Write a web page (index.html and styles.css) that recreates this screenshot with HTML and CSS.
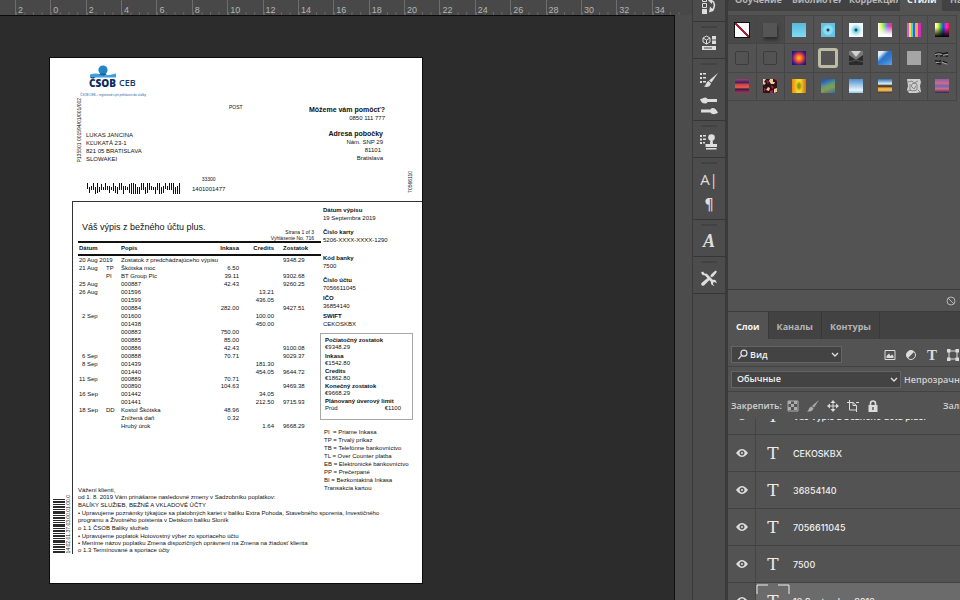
FILE: index.html
```html
<!DOCTYPE html>
<html lang="ru">
<head>
<meta charset="utf-8">
<title>Výpis z účtu</title>
<link rel="stylesheet" href="styles.css">
</head>
<body>
<div class="app">
  <main class="workspace">
    <div class="ruler">
      <span>2</span><span>0</span><span>2</span><span>4</span><span>6</span><span>8</span><span>10</span><span>12</span><span>14</span><span>16</span><span>18</span><span>20</span><span>22</span><span>24</span><span>26</span><span>28</span><span>30</span><span>32</span><span>34</span>
    </div>
    <div class="stage">
      <div class="canvas">
        <article class="page" lang="sk">
          <header class="letterhead">
            <div class="sender">
              <div class="brand">
                <svg class="brand-mark" viewBox="0 0 28 13" aria-hidden="true"><circle cx="14" cy="5" r="4.6" fill="#2484c6"/><path d="M1 9.500Q7 7.500 12 9.500T27 8.500V12.500H1z" fill="#3fa0dc"/><path d="M10 9.500Q14 7 18 9.800Q14 11.500 10 9.500" fill="#1a5fa5"/></svg>
                <div class="brand-name"><b>ČSOB</b> <span>CEB</span></div>
                <div class="brand-note">ČSOB CEB – registered s pri prihlásení do služby</div>
              </div>
              <div class="recipient">
                <span class="sideways">P135501 001594/01/001/002</span>
                <address>LUKAS JANCINA<br>KĽUKATÁ 23-1<br>821 05 BRATISLAVA<br>SLOWAKEI</address>
              </div>
              <div class="routing">
                <svg class="post-code" viewBox="0 0 94 11" aria-hidden="true"><path d="M.5 0v6M2.500 4v6M4.500 3v4M6.500 0v7M8.500 4v7M10.500 0v10M12.500 4v5M14.500 1v6M16.500 4v3M18.500 0v7M20.500 3v4M22.500 3v7M24.500 4v3M26.500 0v8M28.500 3v7M30.500 4v7M32.500 0v7M34.500 0v7M36.500 3v8M38.500 3v4M40.500 4v3M42.500 1v9M44.500 0v11M46.500 0v11M48.500 1v10M50.500 4v7M52.500 4v7M54.500 0v7M56.500 0v7M58.500 4v7M60.500 0v10M62.500 0v7M64.500 3v4M66.500 4v3M68.500 4v7M70.500 0v7M72.500 0v11M74.500 4v7M76.500 3v7M78.500 0v6M80.500 3v4M82.500 0v7M84.500 0v7M86.500 0v11M88.500 4v7M90.500 3v8M92.500 0v11"/></svg>
                <div class="routing-ids"><small>33300</small><span>1401001477</span></div>
              </div>
            </div>
            <div class="post">POST</div>
            <div class="contact">
              <p><strong>Môžeme vám pomôcť?</strong><br>0850 111 777</p>
              <p class="branch"><strong>Adresa pobočky</strong><br>Nám. SNP 29<br><span class="zip">81101</span><br>Bratislava</p>
            </div>
            <span class="sideways form-id">70566110</span>
          </header>

          <div class="statement">
            <div class="rail">
              <svg class="stack-code" viewBox="0 0 12 54" preserveAspectRatio="none" aria-hidden="true"><path d="M0 0h12v1H0zM0 2h12v2H0zM0 5h12v1H0zM0 7h12v2H0zM0 10h12v1H0zM0 12h12v3H0zM0 16h12v1H0zM0 18h12v2H0zM0 21h12v1H0zM0 23h12v1H0zM0 25h12v3H0zM0 29h12v1H0zM0 31h12v2H0zM0 34h12v1H0zM0 36h12v2H0zM0 39h12v1H0zM0 41h12v3H0zM0 45h12v1H0zM0 47h12v2H0zM0 50h12v1H0zM0 52h12v2H0z"/></svg>
              <span class="sideways">14.02.01.37.03.00.01.00.0</span>
            </div>
            <div class="sheet">
              <div class="columns">
                <section class="movements">
                  <div class="heading">
                    <h1>Váš výpis z bežného účtu plus.</h1>
                    <p>Strana 1 of 3<br>Vyhlásenie No. 716</p>
                  </div>
                  <table>
                    <colgroup><col class="c-date"><col class="c-code"><col class="c-text"><col class="c-debit"><col class="c-credit"><col></colgroup>
                    <thead><tr><th>Dátum</th><th></th><th>Popis</th><th class="num">Inkasa</th><th class="num">Credits</th><th class="bal">Zostatok</th></tr></thead>
                    <tbody>
                      <tr><td>20 Aug 2019</td><td></td><td>Zostatok z predchádzajúceho výpisu</td><td></td><td></td><td class="bal">9348.29</td></tr>
                      <tr><td>21 Aug</td><td>TP</td><td>Škótska moc</td><td class="num">6.50</td><td></td><td></td></tr>
                      <tr><td></td><td>PI</td><td>BT Group Plc</td><td class="num">39.11</td><td></td><td class="bal">9302.68</td></tr>
                      <tr><td>25 Aug</td><td></td><td>000887</td><td class="num">42.43</td><td></td><td class="bal">9260.25</td></tr>
                      <tr><td>26 Aug</td><td></td><td>001596</td><td></td><td class="num">13.21</td><td></td></tr>
                      <tr><td></td><td></td><td>001599</td><td></td><td class="num">436.05</td><td></td></tr>
                      <tr><td></td><td></td><td>000884</td><td class="num">282.00</td><td></td><td class="bal">9427.51</td></tr>
                      <tr><td class="short">2 Sep</td><td></td><td>001600</td><td></td><td class="num">100.00</td><td></td></tr>
                      <tr><td></td><td></td><td>001438</td><td></td><td class="num">450.00</td><td></td></tr>
                      <tr><td></td><td></td><td>000883</td><td class="num">750.00</td><td></td><td></td></tr>
                      <tr><td></td><td></td><td>000885</td><td class="num">85.00</td><td></td><td></td></tr>
                      <tr><td></td><td></td><td>000886</td><td class="num">42.43</td><td></td><td class="bal">9100.08</td></tr>
                      <tr><td class="short">6 Sep</td><td></td><td>000888</td><td class="num">70.71</td><td></td><td class="bal">9029.37</td></tr>
                      <tr><td class="short">8 Sep</td><td></td><td>001439</td><td></td><td class="num">181.30</td><td></td></tr>
                      <tr><td></td><td></td><td>001440</td><td></td><td class="num">454.05</td><td class="bal">9644.72</td></tr>
                      <tr class="tight"><td>11 Sep</td><td></td><td>000889</td><td class="num">70.71</td><td></td><td></td></tr>
                      <tr class="tight"><td></td><td></td><td>000890</td><td class="num">104.63</td><td></td><td class="bal">9469.38</td></tr>
                      <tr><td>16 Sep</td><td></td><td>001442</td><td></td><td class="num">34.05</td><td></td></tr>
                      <tr><td></td><td></td><td>001441</td><td></td><td class="num">212.50</td><td class="bal">9715.93</td></tr>
                      <tr><td>18 Sep</td><td>DD</td><td>Kostol Škótska</td><td class="num">48.96</td><td></td><td></td></tr>
                      <tr><td></td><td></td><td>Znížená daň</td><td class="num">0.32</td><td></td><td></td></tr>
                      <tr><td></td><td></td><td>Hrubý úrok</td><td></td><td class="num">1.64</td><td class="bal">9668.29</td></tr>
                    </tbody>
                  </table>
                </section>
                <aside class="details">
                  <dl class="facts">
                    <div><dt>Dátum výpisu</dt><dd>19 Septembra 2019</dd></div>
                    <div><dt>Číslo karty</dt><dd>5206-XXXX-XXXX-1290</dd></div>
                    <div class="wide"><dt>Kód banky</dt><dd>7500</dd></div>
                    <div><dt>Číslo účtu</dt><dd>7056611045</dd></div>
                    <div class="close"><dt>IČO</dt><dd>36854140</dd></div>
                    <div class="close"><dt>SWIFT</dt><dd>CEKOSKBX</dd></div>
                  </dl>
                  <dl class="summary">
                    <dt>Počiatočný zostatok</dt><dd class="opening">€9348.29</dd>
                    <dt>Inkasa</dt><dd>€1542.80</dd>
                    <dt>Credits</dt><dd>€1862.80</dd>
                    <dt>Konečný zostatok</dt><dd>€9668.29</dd>
                    <dt>Plánovaný úverový limit</dt><dd class="limit"><span>Prúd</span><span>€1100</span></dd>
                  </dl>
                  <p class="legend">PI &nbsp;= Priame Inkasa<br>TP = Trvalý príkaz<br>TB = Telefónne bankovníctvo<br>TL = Over Counter platba<br>EB = Elektronické bankovníctvo<br>PP = Prečerpané<br>BI = Bezkontaktná Inkasa<br>Transakcia kartou</p>
                </aside>
              </div>
              <section class="letter">
                <p>Vážení klienti,</p>
                <p>od 1. 8. 2019 Vám prinášame nasledovné zmeny v Sadzobníku poplatkov:</p>
                <p class="spaced">BALÍKY SLUŽIEB, BEŽNÉ A VKLADOVÉ ÚČTY</p>
                <p class="spaced">• Upravujeme poznámky týkajúce sa platobných kariet v balíku Extra Pohoda, Stavebného sporenia, Investičného<br>programu a Životného poistenia v Detskom balíku Sloník</p>
                <p class="spaced">o 1.1 ČSOB Balíky služieb</p>
                <p class="spaced">• Upravujeme poplatok Hotovostný výber zo sporiaceho účtu</p>
                <p>• Meníme názov poplatku Zmena dispozičných oprávnení na Zmena na žiadosť klienta</p>
                <p>o 1.3 Termínované a sporiace účty</p>
              </section>
            </div>
          </div>
        </article>
      </div>
      <div class="scroll-track"></div>
    </div>
  </main>

  <nav class="dock" aria-label="Панели">
    <div class="dock-group first">
      <button aria-label="История"><svg viewBox="0 0 16 18"><path d="M1.500 1.500h4v3h-4zM1.500 6.500h4v4h-4z" class="line"/><path d="M1 12h5v5H1z"/><path d="M9 3.500c5 0 6 7 1.500 10.500" class="line bold"/><path d="M8 15.500l1-6 4 4zM7 3.500L11 0v7z"/></svg></button>
    </div>
    <div class="dock-group one">
      <button aria-label="3D"><svg viewBox="0 0 16 18"><path d="M5.500 2L9 4v4L5.500 10 2 8V4zM2 4l3.500 2L9 4M5.500 6v4" class="line"/><path d="M11 2h4v3.500h-4zM11 6.500h4V10h-4zM1 12h14v4H1z"/><path d="M3 14h8" class="cut"/></svg></button>
    </div>
    <div class="dock-group two">
      <button aria-label="Кисти"><svg viewBox="0 0 18 18"><path d="M0 2h2v2H0zM3 2h3v1.500H3zM0 6h2v2H0zM3 6h3v1.500H3zM0 10h2v2H0zM3 10h3v1.500H3z"/><path d="M18 2L11.500 11.500 9 9.500zM8.500 10l2.500 2.500C10 16 7 16.500 4 15.500c2-.8 2-4.500 4.500-5.500z"/></svg></button>
      <button aria-label="Настройки кисти"><svg viewBox="0 0 18 18"><path d="M0 2c2 .5 3-1.500 5.500-1.500 1 0 1.500.8 2 1.500H17v3H7.500C7 6 6 6.500 5 6.500 2.500 6.500 1 5 0 2zM18 16c-2 .5-3 1.500-5.500 1-1 0-1.500-.8-2-1.500H1v-3h9.500c.5-.8 1-1.500 2-1.500 2.500 0 4.500 2 5.500 5z"/></svg></button>
    </div>
    <div class="dock-group one">
      <button aria-label="Источник клонов"><svg viewBox="0 0 18 18"><path d="M0 2h2v2H0zM3 2h3v1.500H3zM0 5.500h2v2H0zM3 5.500h3V7H3zM0 9h2v2H0zM3 9h2v1.500H3z"/><circle cx="11.500" cy="4.500" r="3.300"/><path d="M10.500 6h2l.5 5h4v3H5.500v-3H10zM6 15h10.500v1.500H6z"/></svg></button>
    </div>
    <div class="dock-group two">
      <button class="glyph" aria-label="Символ">A|</button>
      <button class="glyph para" aria-label="Абзац">¶</button>
    </div>
    <div class="dock-group one">
      <button class="glyph script" aria-label="Глифы">A</button>
    </div>
    <div class="dock-group one">
      <button aria-label="Наборы инструментов"><svg viewBox="0 0 18 18"><path d="M3 2.500l1.500 2 2.300.3L13 11c2-.6 4 1 3.500 3.500L15 13l-1.800.5-.3 1.700 1.600 1.500c-2.500.3-4-1.500-3.500-3.600L5 6.500 2.500 6 1 3.500zM15.500 1.500l1.500 1.200-3.500 4.500-2 1-1.200-1.200 1.200-2zM7.500 9l2 2-5.500 5.500c-2 .8-3.500-.8-2.500-2.500z"/></svg></button>
    </div>
    <div class="dock-rest"></div>
  </nav>

  <aside class="panels">
    <section class="styles-panel">
      <div class="tabs top-tabs">
        <button>Обучение</button><button>Библиотеки</button><button>Коррекция</button><button class="active">Стили</button><button>Наборы</button>
      </div>
      <div class="swatches">
        <button class="dark" aria-label="Без стиля"><i class="s-none"></i></button>
        <button class="dark" aria-label="Тень"><i class="s-shadow"></i></button>
        <button aria-label="Голубой"><i class="s-cyan"></i></button>
        <button aria-label="Кнопка"><i class="s-dot"></i></button>
        <button aria-label="Свечение"><i class="s-glow"></i></button>
        <button aria-label="Спектр"><i class="s-fade"></i></button>
        <button aria-label="Полосы"><i class="s-stripes"></i></button>
        <button aria-label="Спектр тёмный"><i class="s-dusk"></i></button>
        <button aria-label="Контур"><i class="s-empty"></i></button>
        <button aria-label="Контур 2"><i class="s-empty"></i></button>
        <button aria-label="Солнце"><i class="s-sun"></i></button>
        <button aria-label="Рамка"><i class="s-frame"></i></button>
        <button aria-label="Хром"><svg viewBox="0 0 14 14"><path fill="#2b2b2b" d="M0 0h14v14H0z"/><path fill="#777" d="M0 0h14v4L7 9 0 4z"/><path fill="#d2d2d2" d="M2 0h10L7 6z"/><path d="M0 11l7-2 7 2" stroke="#555" fill="none"/></svg></button>
        <button aria-label="Стекло"><i class="s-glass"></i></button>
        <button aria-label="Серый"><i class="s-grey"></i></button>
        <button aria-label="Штрих"><svg viewBox="0 0 16 16"><path d="M0 3l5-1 4 1 6-1M1 6l2-1M6 6l3-1 6 1M0 11l4 1 3-1M9 12l5 2M2 14l5 1" stroke="#151515" stroke-width="1.600" fill="none"/><path d="M0 4l5-1 3 1M9 5l6-1M1 13h4M8 13l6 2" stroke="#b9b9b9" fill="none"/></svg></button>
        <button aria-label="Закат"><i class="s-bands"></i></button>
        <button aria-label="Мозаика"><svg viewBox="0 0 14 14"><path fill="#301018" d="M0 0h14v14H0z"/><path fill="#e7d19b" d="M0 0h3l-2 3 2 1-2 2-1-1zM7 0h3l0 3 2 0-1 2-3 0-2-3zM5 8l2 1-1 3-3-1zM11 10l3-1v4l-3 1z"/><path fill="#a32350" d="M3 1l3 1-1 3zM8 6l3 2-2 2zM1 9l2 1-2 3zM11 0h3v2zM7 12l3-1v3H7z"/></svg></button>
        <button aria-label="Золото"><i class="s-gold"></i></button>
        <button aria-label="Пейзаж"><i class="s-land"></i></button>
        <button aria-label="Небо"><i class="s-sky"></i></button>
        <button aria-label="Пляж"><i class="s-beach"></i></button>
        <button aria-label="Камень"><svg viewBox="0 0 14 14"><path fill="#cfcfcf" d="M0 0h13l1 3-1 4 1 6-5 1H2L0 11l1-4z"/><path d="M1 3l4-1 2 2 4-2M3 5v6l3 1 4-1V5L6 4 4 7l3 3 2-3M1 12l3-1M11 11l2 2" stroke="#858585" fill="none"/></svg></button>
        <button aria-label="Сумерки"><i class="s-lilac"></i></button>
      </div>
    </section>
    <div class="styles-footer"><button aria-label="Очистить стиль"><svg viewBox="0 0 12 12"><circle cx="6" cy="6" r="4" class="line"/><path d="M3 3l6 6" class="line"/></svg></button></div>

    <div class="tabs layer-tabs">
      <button class="active">Слои</button><button>Каналы</button><button>Контуры</button>
    </div>
    <section class="layers-panel">
      <div class="row">
        <label class="pick kind"><svg class="lens" viewBox="0 0 12 12"><circle cx="7" cy="4.500" r="3.300"/><path d="M4.500 7L1 11"/></svg><select aria-label="Тип фильтра"><option>Вид</option></select><svg class="chevron" viewBox="0 0 8 6"><path d="M1 1l3 3 3-3"/></svg></label>
        <div class="filters">
          <button aria-label="Пиксели"><svg viewBox="0 0 12 12"><path d="M1 1.500h10v9H1z" class="line"/><path d="M2.500 9V7L5 4.500 6.500 7 8 5.500 9.500 7v2z"/></svg></button>
          <button aria-label="Коррекция"><svg viewBox="0 0 12 12"><circle cx="6" cy="6" r="4.500" class="line"/><path d="M9.200 2.800A4.500 4.500 0 0 0 2.800 9.200z"/></svg></button>
          <button class="type-mark" aria-label="Текст">T</button>
          <button aria-label="Фигуры"><svg viewBox="0 0 12 12"><path d="M2 2h8v8H2z" class="line"/><path d="M0 0h3.500v3.500H0zM8.500 0H12v3.500H8.500zM0 8.500h3.500V12H0zM8.500 8.500H12V12H8.500z"/></svg></button>
        </div>
      </div>
      <div class="row">
        <label class="pick blend"><select aria-label="Режим наложения"><option>Обычные</option></select><svg class="chevron" viewBox="0 0 8 6"><path d="M1 1l3 3 3-3"/></svg></label>
        <span class="caption opacity">Непрозрачность:</span>
      </div>
      <div class="row locks">
        <span class="caption">Закрепить:</span>
        <div class="lock-icons">
          <button aria-label="Прозрачность"><svg viewBox="0 0 12 12" opacity=".65"><path d="M1 1h10v10H1z" class="line"/><path d="M1 1h3v3H1zM7 1h3v3H7zM4 4h3v3H4zM1 7h3v3H1zM7 7h3v3H7z"/></svg></button>
          <button aria-label="Пиксели слоя"><svg viewBox="0 0 12 12" opacity=".65"><path d="M12 0L7 7.500 5 6zM4.500 6.500l2 1.700C6 11 3 12 0 11.500c2-1 1.500-4 4.500-5z"/></svg></button>
          <button aria-label="Положение"><svg viewBox="0 0 12 12"><path d="M6 0l2.500 3h-2v2.500H9v-2L12 6 9 8.500v-2H6.500V9h2L6 12 3.500 9h2V6.500H3v2L0 6l3-2.500v2h2.500V3h-2z"/></svg></button>
          <button aria-label="Монтажная область"><svg viewBox="0 0 12 12"><path d="M2.500 0v10H10M0 2.500h6l3.500 3V12M6 2.500v3h3.500M9 2.500h3" class="line"/></svg></button>
          <button aria-label="Закрепить всё"><svg viewBox="0 0 12 12"><path d="M3.500 6V3.500a2.500 2.500 0 0 1 5 0V6" class="line bold"/><path fill-rule="evenodd" d="M1.500 5h9v7h-9zM5.300 7v3h1.400V7z"/></svg></button>
        </div>
        <span class="caption fill">Заливка:</span>
      </div>
      <ul class="layers">
        <li><button class="eye" aria-label="Видимость"><svg viewBox="0 0 12 8"><path fill-rule="evenodd" d="M0 4Q6-4 12 4Q6 12 0 4zM6 1.500a2.500 2.500 0 1 0 .01 0z"/><circle cx="6" cy="4" r="1"/></svg></button><span class="thumb">T</span><span class="name">Váš výpis z bežného účtu plus.</span></li>
        <li><button class="eye" aria-label="Видимость"><svg viewBox="0 0 12 8"><path fill-rule="evenodd" d="M0 4Q6-4 12 4Q6 12 0 4zM6 1.500a2.500 2.500 0 1 0 .01 0z"/><circle cx="6" cy="4" r="1"/></svg></button><span class="thumb">T</span><span class="name">CEKOSKBX</span></li>
        <li><button class="eye" aria-label="Видимость"><svg viewBox="0 0 12 8"><path fill-rule="evenodd" d="M0 4Q6-4 12 4Q6 12 0 4zM6 1.500a2.500 2.500 0 1 0 .01 0z"/><circle cx="6" cy="4" r="1"/></svg></button><span class="thumb">T</span><span class="name">36854140</span></li>
        <li><button class="eye" aria-label="Видимость"><svg viewBox="0 0 12 8"><path fill-rule="evenodd" d="M0 4Q6-4 12 4Q6 12 0 4zM6 1.500a2.500 2.500 0 1 0 .01 0z"/><circle cx="6" cy="4" r="1"/></svg></button><span class="thumb">T</span><span class="name">7056611045</span></li>
        <li><button class="eye" aria-label="Видимость"><svg viewBox="0 0 12 8"><path fill-rule="evenodd" d="M0 4Q6-4 12 4Q6 12 0 4zM6 1.500a2.500 2.500 0 1 0 .01 0z"/><circle cx="6" cy="4" r="1"/></svg></button><span class="thumb">T</span><span class="name">7500</span></li>
        <li class="selected"><button class="eye" aria-label="Видимость"><svg viewBox="0 0 12 8"><path fill-rule="evenodd" d="M0 4Q6-4 12 4Q6 12 0 4zM6 1.500a2.500 2.500 0 1 0 .01 0z"/><circle cx="6" cy="4" r="1"/></svg></button><span class="thumb">T<svg class="corners" viewBox="0 0 34 34"><path d="M1 10V1h11M22 1h11v9M1 24v9h11M22 33h11v-9"/></svg></span><span class="name">19 Septembra 2019</span></li>
      </ul>
    </section>
  </aside>
</div>
</body>
</html>
```

FILE: styles.css
```css
* { box-sizing: border-box; }
body { margin: 0; background: #2c2c2c; font-family: "Open Sans", "Noto Sans", sans-serif; }
p, dl, dd, h1, ul { margin: 0; padding: 0; }
button { display: block; margin: 0; padding: 0; border: 0; background: none; color: inherit; font: inherit; }
svg { display: block; overflow: visible; }

.app { display: flex; height: 100vh; overflow: hidden; }

/* Workspace */
.workspace { flex: 1; min-width: 0; display: flex; flex-direction: column; }
.ruler {
  display: grid; grid-template-columns: repeat(19, 1fr);
  height: 15px; flex: none; padding: 0 5px 0 15px;
  background: #484848; color: #b4b4b4;
  font: 9px/10px "Liberation Sans", sans-serif;
}
.ruler span {
  padding: 5px 0 0 2px; border-left: 1px solid #6d6d6d;
  background: linear-gradient(90deg, #666 1px, transparent 1px) 0 100% / 25% 3px repeat-x;
}
.stage { flex: 1; min-height: 0; display: flex; }
.canvas {
  flex: 1; min-width: 0; padding: 42px 0 0 50px; overflow: hidden;
  background: #2c2c2c; border-top: 1px solid #0a0a0a; border-right: 1px solid #101010;
}
.scroll-track { width: 17px; background: #4c4c4c; }

/* Statement page */
.page {
  width: 372px; padding-bottom: 29px; background: #fff; color: #111;
  box-shadow: 0 0 0 1px #0c0c0c;
  font: 6px/8px "Liberation Sans", Arial, sans-serif; white-space: nowrap;
}
.sideways { writing-mode: vertical-rl; transform: rotate(180deg); font-size: 5px; line-height: 5px; }
.letterhead { display: flex; height: 143px; }
.sender { width: 178px; padding-top: 7px; }
.brand { padding-left: 30px; color: #173a6c; font-family: "Open Sans", sans-serif; }
.brand-mark { width: 28px; height: 13px; margin-left: 9px; }
.brand-name { display: flex; gap: 3px; margin-left: 9px; font-size: 10px; line-height: 10px; }
.brand-name b { font-weight: 800; color: #0c2a5c; }
.brand-name span { font-weight: 600; font-size: 9px; }
.brand-note { margin-top: 3px; font: 3px/8px "Liberation Sans", sans-serif; color: #2d5d9c; }
.recipient { display: flex; gap: 4px; align-items: flex-end; height: 64px; padding-left: 27px; }
.recipient address { font-style: normal; }
.routing { display: flex; gap: 11px; padding: 12px 0 0 37px; }
.post-code { width: 94px; height: 11px; margin-top: 8px; stroke: #111; stroke-width: 1; }
.routing-ids { display: flex; flex-direction: column; align-items: center; gap: 2px; }
.routing-ids small { font-size: 5px; }
.post { width: 24px; padding: 45px 0 0 1px; font-size: 5px; }
.contact { width: 133px; padding-top: 48px; text-align: right; }
.contact strong { font-size: 7px; }
.branch { padding: 8px 2px 0 0; }
.zip { margin-right: 2px; }
.form-id { align-self: flex-end; margin: 0 0 8px 23px; }

.statement { display: flex; }
.rail { width: 22px; flex: none; display: flex; align-items: flex-end; gap: 1px; padding: 0 0 1px 3px; }
.stack-code { width: 12px; height: 54px; fill: #2a2a2a; }
.sheet { flex: 1; min-width: 0; border: solid #333; border-width: 1px 0 0 1px; }
.columns { display: flex; }
.movements { width: 248px; padding-left: 5px; }
.heading { display: flex; justify-content: space-between; align-items: flex-end; height: 39px; padding: 0 7px 0 4px; }
.heading h1 { font-size: 9px; line-height: 12px; font-weight: normal; padding-bottom: 8px; }
.heading p { font-size: 5px; line-height: 6px; text-align: right; }
table { width: 100%; table-layout: fixed; border-collapse: separate; border-spacing: 0; }
th, td { padding: 0; height: 8px; text-align: left; }
th { height: 15px; border: solid #111; border-width: 2px 0; line-height: 11px; }
th:first-child, td:first-child { padding-left: 1px; }
td:first-child.short { padding-left: 4px; }
.tight td { height: 7px; line-height: 7px; }
.c-date { width: 28px; }
.c-code { width: 15px; }
.c-text { width: 90px; }
.c-debit { width: 28px; }
.c-credit { width: 35px; }
.num { text-align: right; }
.bal { padding-left: 9px; }

.details { padding: 4px 0 0 2px; }
.facts div { margin-top: 6px; }
.facts div:first-child { margin-top: 0; }
.facts .wide { margin-top: 10px; }
.facts .close { margin-top: 2px; }
dt { font-weight: bold; }
.summary { width: 93px; height: 87px; margin: 5px 0 0 -3px; padding: 2px 11px 0 4px; border: 1px solid #a8a8a8; }
.summary dd { line-height: 7px; }
.summary .opening { margin-bottom: 1px; }
.limit { display: flex; justify-content: space-between; }
.legend { margin-top: 8px; padding-left: 1px; }
.letter { margin-top: -5px; padding-left: 5px; line-height: 7px; }
.letter .spaced { margin-top: 1px; }

/* Collapsed panel dock */
.dock { width: 36px; flex: none; display: flex; flex-direction: column; background: #4c4c4c; border: solid #3a3a3a; border-width: 0 3px 0 1px; color: #dedede; }
.dock-group { display: flex; flex-direction: column; align-items: center; padding-top: 12px; gap: 8px; border-bottom: 1px solid #363636; background: linear-gradient(#424242, #424242) 50% 4px / 16px 2px no-repeat; }
.first { height: 22px; padding-top: 0; background: none; }
.first button { margin-top: -3px; }
.one { height: 37px; }
.two { height: 62px; }
.dock svg { width: 18px; height: 18px; fill: currentColor; }
.line { fill: none; stroke: currentColor; stroke-width: 1; }
.line.bold { stroke-width: 1.6; }
.cut { stroke: #4c4c4c; stroke-width: 1; }
.glyph { font-size: 15px; line-height: 18px; }
.para { font-family: "DejaVu Sans", sans-serif; }
.script { font-family: "Liberation Serif", serif; font-style: italic; font-weight: bold; font-size: 18px; }

/* Panels */
.panels { width: 232px; flex: none; display: flex; flex-direction: column; overflow: hidden; background: #535353; color: #dcdcdc; }
.tabs { display: flex; flex: none; background: #424242; color: #b5b5b5; font-size: 9px; font-weight: 700; white-space: nowrap; }
.tabs button { border-right: 1px solid #383838; padding: 0 8px; }
.tabs .active { background: #535353; color: #f4f4f4; }
.top-tabs { margin-top: -12px; height: 23px; line-height: 22px; padding-left: 3px; }
.top-tabs button { flex: none; width: 49px; margin: 0 4px; padding: 0; border: 0; overflow: hidden; text-align: left; }
.top-tabs .active { width: 42px; margin-left: -2px; padding: 0 7px; }
.styles-panel { height: 289px; flex: none; overflow: hidden; }
.swatches { display: grid; grid-template: repeat(3, 1fr) / repeat(8, 1fr); height: 86px; margin: 4px 3px 0 0; border-top: 1px solid #464646; }
.swatches button { display: grid; place-items: center; border: solid #464646; border-width: 0 1px 1px 0; }
.swatches .dark { background: #494949; }
.swatches svg { width: 14px; height: 14px; }
.swatches i { display: block; width: 14px; height: 14px; }
.swatches .s-none { width: 16px; height: 16px; border: 1px solid #111; background: linear-gradient(to top right, transparent 44%, #a3202c 46% 54%, transparent 56%), #fff; }
.s-shadow { background: #555; box-shadow: 1px 3px 3px #2d2d2d; }
.s-cyan { background: linear-gradient(#5bb9d8, #7fdcf3); }
.s-dot { background: radial-gradient(circle, #1b4d66 1px, #8fdcf0 2px 4px, #62c4e2 6px); }
.s-glow { background: radial-gradient(circle, #1b4d66 1px, #7fd3ea 2px, #eefaff 6px); }
.s-fade { background: linear-gradient(0deg, #fff 15%, #fff0 80%), linear-gradient(90deg, #fff, #e6f53e 25%, #5fe08c 45%, #b04af0 70%, #ff2e5b); }
.s-stripes { background: linear-gradient(90deg, #e957c8 0 12%, #f7e935 12% 30%, #45d9d0 30% 45%, #3a55e0 45% 60%, #f7a52c 60% 78%, #d02bb5 78%); }
.s-dusk { background: linear-gradient(transparent 30%, #000), linear-gradient(90deg, #fff, #f5f03c 20%, #35c060 40%, #3440e0 60%, #f02be0 80%, #ff2020); }
.s-empty { border: 1px solid #3c3c3c; border-radius: 2px; }
.s-sun { background: radial-gradient(circle, #ffb02e 1px, #f0432b 4px, #3d1b8f 7px, #1c1066); }
.swatches .s-frame { width: 20px; height: 20px; border: 3px solid #bcbba3; border-radius: 3px; }
.s-glass { background: linear-gradient(135deg, #dcecf8 20%, transparent 42%), linear-gradient(150deg, #1f5fb4, #2f7bd0 60%, #5fa5e6); }
.s-grey { background: #a5a5a5; }
.s-bands { background: linear-gradient(#a03d7e, #3b2660 25%, #d8433d 40%, #e85a4a 60%, #2c2050 72%, #b5324c); }
.s-gold { background: radial-gradient(ellipse 3px 5px, #8f9a1c 40%, transparent), linear-gradient(90deg, #e8890f, #f8d925 40% 60%, #d96a10); }
.s-land { background: linear-gradient(160deg, #2c59b8 15%, #5b9c86 45%, #8b9c45 65%, #2b6fb4); }
.s-sky { background: linear-gradient(#4c8fd0, #e8f5fc 80%, #8cc6ea); }
.s-beach { background: linear-gradient(#2c71ae, #dff0f5 35%, #23201c 50%, #f5a62e 65%, #f0c269 80%, #31271c); }
.s-lilac { background: linear-gradient(#8b5fa8, #d3698b 30%, #6d66b8 50%, #d06c86 70%, #33264d); }
.styles-footer { height: 23px; flex: none; display: flex; justify-content: flex-end; align-items: center; padding-right: 3px; border: solid #3c3c3c; border-width: 1px 0; color: #b5b5b5; }
.styles-footer svg { width: 12px; height: 12px; }
.layer-tabs { height: 27px; line-height: 29px; }

.layers-panel { flex: 1; min-height: 0; display: flex; flex-direction: column; overflow: hidden; font-size: 9px; }
.row { display: flex; flex: none; align-items: center; height: 25px; padding-left: 3px; border-bottom: 1px solid #424242; white-space: nowrap; }
.row:first-child { height: 28px; padding-top: 4px; }
.row.locks { height: 27px; border: 0; }
.layers-panel svg { fill: currentColor; }
.layers-panel .line { fill: none; }
.pick { position: relative; flex: none; }
.pick select {
  display: block; width: 100%; height: 17px; padding: 0 5px; appearance: none;
  border: 1px solid #646464; border-radius: 0; background: #434343; color: #f0f0f0;
  font: 600 9px/14px "Open Sans", sans-serif;
}
.pick.kind { width: 111px; }
.kind select { padding-left: 18px; }
.blend { width: 170px; }
.chevron, .lens { position: absolute; top: 6px; right: 3px; width: 8px; height: 6px; stroke: #dedede; stroke-width: 1.4; }
.lens { top: 3px; left: 6px; width: 12px; height: 11px; }
.layers-panel .chevron, .layers-panel .lens { fill: none; }
.filters { display: flex; align-items: center; gap: 9px; margin-left: 42px; }
.filters svg, .lock-icons svg { width: 12px; height: 12px; }
.type-mark { width: 12px; font: bold 15px/12px "Liberation Serif", serif; }
.caption { color: #d0d0d0; font-weight: 600; }
.opacity { margin-left: 3px; }
.lock-icons { display: flex; gap: 8px; margin-left: 5px; }
.locks .fill { margin-left: 64px; }

.layers { list-style: none; overflow: hidden; flex: 1; min-height: 0; }
.layers li { display: flex; align-items: center; height: 37px; border-bottom: 1px solid #424242; }
.layers li:first-child { margin-top: -21px; }
.eye { align-self: stretch; width: 28px; flex: none; display: grid; place-items: center; border-right: 1px solid #464646; background: #535353; }
.eye svg { width: 12px; height: 8px; }
.thumb { position: relative; width: 34px; flex: none; text-align: center; font: 17px/36px "DejaVu Serif", serif; color: #ececec; }
.corners { position: absolute; inset: 1px 0 0; stroke: #eee; stroke-width: 1; }
.layers-panel .corners { fill: none; }
.name { padding: 2px 0 0 3px; font: 500 9px/36px Inter, sans-serif; color: #f0f0f0; white-space: nowrap; }
.selected { background: #6b6b6b; }
```
